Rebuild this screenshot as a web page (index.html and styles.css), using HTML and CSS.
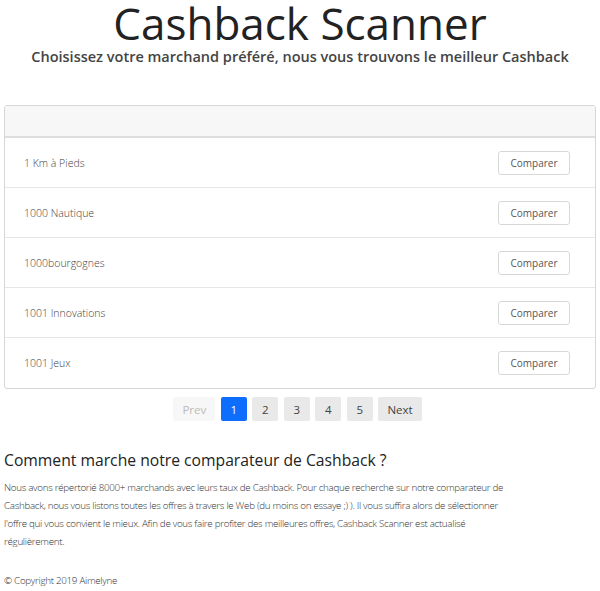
FILE: index.html
```html
<!DOCTYPE html>
<html lang="fr">
<head>
<meta charset="utf-8">
<title>Cashback Scanner</title>
<link rel="stylesheet" href="styles.css">
</head>
<body>
<div class="page">
  <header class="hero">
    <h1 class="title">Cashback Scanner</h1>
    <p class="subtitle">Choisissez votre marchand préféré, nous vous trouvons le meilleur Cashback</p>
  </header>

  <section class="card">
    <div class="card-header"></div>
    <ul class="list">
      <li class="row"><span class="name">1 Km à Pieds</span><button class="btn">Comparer</button></li>
      <li class="row"><span class="name">1000 Nautique</span><button class="btn">Comparer</button></li>
      <li class="row"><span class="name">1000bourgognes</span><button class="btn">Comparer</button></li>
      <li class="row"><span class="name">1001 Innovations</span><button class="btn">Comparer</button></li>
      <li class="row"><span class="name">1001 Jeux</span><button class="btn">Comparer</button></li>
    </ul>
  </section>

  <nav class="pager">
    <span class="pg disabled">Prev</span>
    <span class="pg active">1</span>
    <span class="pg">2</span>
    <span class="pg">3</span>
    <span class="pg">4</span>
    <span class="pg">5</span>
    <span class="pg">Next</span>
  </nav>

  <section class="about">
    <h2 class="about-title">Comment marche notre comparateur de Cashback ?</h2>
    <p class="about-text">Nous avons répertorié 8000+ marchands avec leurs taux de Cashback. Pour chaque recherche sur notre comparateur de Cashback, nous vous listons toutes les offres à travers le Web (du moins on essaye ;) ). Il vous suffira alors de sélectionner l'offre qui vous convient le mieux. Afin de vous faire profiter des meilleures offres, Cashback Scanner est actualisé régulièrement.</p>
  </section>

  <footer class="footer">© Copyright 2019 Aimelyne</footer>
</div>
</body>
</html>
```

FILE: styles.css
```css
* { box-sizing: border-box; }
html, body { margin: 0; padding: 0; background: #fff; }
body {
  font-family: "Open Sans", "Noto Sans", sans-serif;
  color: #212529;
}
.page { padding: 0 4px; }
.hero { text-align: center; }
.title {
  margin: 0;
  font-size: 44px;
  font-weight: 400;
  line-height: 46px;
  color: #222;
}
.subtitle {
  margin: 0;
  font-size: 14.5px;
  font-weight: 600;
  line-height: 22px;
  color: #444;
}
.card {
  margin-top: 37px;
  border: 1px solid #d6d6d6;
  border-radius: 3px;
  overflow: hidden;
}
.card-header {
  height: 32px;
  background: #f7f7f7;
  border-bottom: 2px solid #dedede;
}
.list { list-style: none; margin: 0; padding: 0; }
.row {
  height: 50px;
  display: flex;
  align-items: center;
  justify-content: space-between;
  padding: 0 25px 0 19px;
  border-bottom: 1px solid #e6e6e6;
}
.row:last-child { border-bottom: 0; }
.name { font-size: 10.5px; font-weight: 300; color: #444; }
.btn {
  font-family: inherit;
  font-size: 10px;
  color: #555;
  background: #fff;
  border: 1px solid #d8d8d8;
  border-radius: 3px;
  width: 72px;
  height: 24px;
  padding: 0;
}
.pager {
  display: flex;
  justify-content: center;
  gap: 5.5px;
  margin-top: 8px;
  padding-right: 5px;
}
.pg {
  display: flex;
  align-items: center;
  justify-content: center;
  height: 24px;
  min-width: 26px;
  padding: 0 9px;
  font-size: 11.5px;
  color: #444;
  background: #e9e9e9;
  border-radius: 2px;
}
.pg.disabled { background: #f7f7f7; color: #bbb; padding: 0; width: 42px; }
.pg.active { background: #0d6efd; color: #fff; }
.about { margin-top: 28px; }
.about-title {
  margin: 0;
  font-size: 15.7px;
  font-weight: 500;
  line-height: 22px;
  color: #222;
}
.about-text {
  max-width: 512px;
  margin: 8px 0 0;
  font-size: 9.8px;
  font-weight: 300;
  letter-spacing: -0.3px;
  line-height: 18px;
  color: #333;
}
.footer {
  margin-top: 23px;
  font-size: 9.8px;
  font-weight: 300;
  letter-spacing: -0.3px;
  color: #333;
}
```
